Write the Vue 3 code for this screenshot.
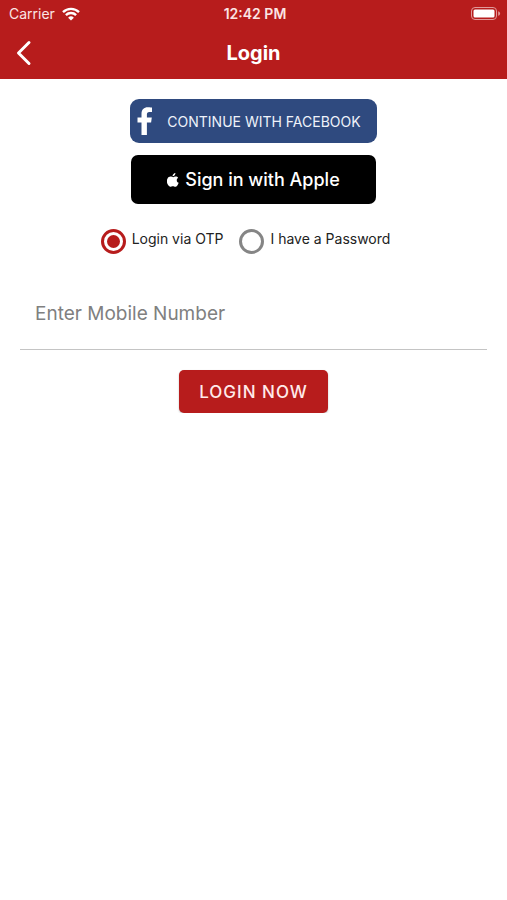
<script setup>
import { ref } from 'vue'

const method = ref('otp')
const mobile = ref('')
</script>

<template>
  <div class="screen">
    <header class="header">
      <div class="status">
        <div class="carrier">
          <span>Carrier</span>
          <svg class="wifi" viewBox="0 0 18 14" aria-hidden="true">
            <path d="M1 5.1a11.5 11.5 0 0 1 16 0" />
            <path d="M3.9 8.1a7.3 7.3 0 0 1 10.2 0" />
            <path class="dot" d="M9 13.6 6.1 10.7a4.1 4.1 0 0 1 5.8 0z" />
          </svg>
        </div>
        <span class="time">12:42 PM</span>
        <svg class="battery" viewBox="0 0 30 14" aria-hidden="true">
          <rect class="shell" x="0.5" y="0.5" width="25" height="12" rx="3.5" />
          <rect class="charge" x="2.500" y="2.5" width="21" height="8" rx="1.5" />
          <path class="cap" d="M27.2 4.200c2.6 1.100 2.6 3.500 0 4.600z" />
        </svg>
      </div>
      <nav class="bar">
        <button class="back" type="button" aria-label="Back">
          <svg viewBox="0 0 16 26" aria-hidden="true"><path d="M13 2.5 2.5 13 13 23.5" /></svg>
        </button>
        <h1>Login</h1>
      </nav>
    </header>

    <main class="content">
      <button class="social facebook" type="button">
        <svg class="fb" viewBox="0 0 16 28" aria-hidden="true">
          <path d="M4.500 28V15.500H.5v-5h4V6.800C4.500 2.500 7 .3 10.800.3c2.300 0 4.200.3 4.200.3v4.300h-2.600c-2 0-2.500 1-2.500 2.400v3.200h4.900l-.7 5H9.900V28z" />
        </svg>
        <span>CONTINUE WITH FACEBOOK</span>
      </button>

      <button class="social apple" type="button">
        <svg class="fruit" viewBox="0 0 24 28" aria-hidden="true">
          <path d="M16.800 0c.2 1.700-.5 3.300-1.500 4.500-1.100 1.300-2.700 2.200-4.200 2.100-.2-1.600.6-3.300 1.500-4.300C13.700 1 15.500.1 16.800 0zM22.300 9.600c-1.400.9-2.800 2.400-2.800 4.700 0 2.700 1.700 4.500 3.900 5.300-.5 1.500-1.200 2.900-2.100 4.200-1.300 1.900-2.600 3.800-4.700 3.800s-2.600-1.200-5-1.200-3 1.200-4.800 1.200c-2.100 0-3.600-2-4.900-3.900C-.5 20-1.200 14.500 1.100 10.800c1.300-2.200 3.600-3.600 6-3.600 2.200 0 3.600 1.200 5.300 1.200 1.600 0 2.700-1.200 5.300-1.200 1.800 0 3.500.9 4.600 2.400z" />
        </svg>
        <span>Sign in with Apple</span>
      </button>

      <div class="methods" role="radiogroup" aria-label="Login method">
        <label>
          <input v-model="method" type="radio" name="method" value="otp" />
          <span>Login via OTP</span>
        </label>
        <label>
          <input v-model="method" type="radio" name="method" value="password" />
          <span>I have a Password</span>
        </label>
      </div>

      <input
        v-model="mobile"
        class="mobile"
        type="tel"
        placeholder="Enter Mobile Number"
        aria-label="Enter Mobile Number"
      />

      <button class="submit" type="button">LOGIN NOW</button>
    </main>
  </div>
</template>

<style>
body {
  margin: 0;
  background: #fff;
}
</style>

<style scoped>
.screen {
  font-family: Inter, "Liberation Sans", sans-serif;
  color: #222;
}

button {
  padding: 0;
  border: 0;
  font-family: inherit;
  cursor: pointer;
}

.header {
  background: #b71c1c;
  color: #fff;
}

.status {
  display: grid;
  grid-template-columns: 1fr auto 1fr;
  align-items: center;
  height: 27px;
  padding: 0 6px 0 9px;
  font-size: 14px;
  color: #fbe4e4;
}

.carrier {
  display: flex;
  align-items: center;
  gap: 7px;
}

.wifi {
  width: 18px;
  height: 14px;
  fill: none;
  stroke: #fff;
  stroke-width: 2.4;
}

.wifi .dot {
  fill: #fff;
  stroke: none;
}

.time {
  font-weight: 600;
}

.battery {
  justify-self: end;
  width: 30px;
  height: 14px;
}

.shell {
  fill: none;
  stroke: #e09a9a;
}

.charge {
  fill: #fff;
}

.cap {
  fill: #e09a9a;
}

.bar {
  display: grid;
  grid-template-columns: 1fr auto 1fr;
  align-items: center;
  height: 52px;
  padding: 0 16px;
}

.back {
  display: flex;
  justify-self: start;
  background: none;
}

.back svg {
  width: 16px;
  height: 26px;
  fill: none;
  stroke: #fff;
  stroke-width: 3;
  stroke-linecap: round;
  stroke-linejoin: round;
}

h1 {
  margin: 0;
  font-size: 20px;
  font-weight: 700;
  line-height: 24px;
}

.content {
  display: flex;
  flex-direction: column;
  align-items: center;
  padding: 20px 20px 0;
}

.social {
  display: flex;
  align-items: center;
  color: #fff;
}

.facebook {
  gap: 14px;
  height: 44px;
  padding: 0 16px 0 7px;
  border-radius: 9px;
  background: #2f4a7f;
  color: #eef2fa;
  font-size: 14px;
}

.fb {
  width: 16px;
  height: 28px;
  fill: #fff;
}

.apple {
  justify-content: center;
  gap: 6px;
  width: 245px;
  height: 49px;
  margin-top: 12px;
  border-radius: 7px;
  background: #000;
  font-size: 18px;
  font-weight: 500;
}

.fruit {
  width: 12px;
  height: 14px;
  fill: #fff;
}

.methods {
  display: flex;
  gap: 16px;
  margin-top: 25px;
  padding-right: 16px;
}

.methods label {
  display: flex;
  gap: 6px;
  font-size: 14px;
  line-height: 20px;
}

.methods input {
  box-sizing: border-box;
  appearance: none;
  display: grid;
  place-items: center;
  width: 25px;
  height: 25px;
  margin: 0;
  border: 3px solid #858585;
  border-radius: 50%;
}

.methods input:checked {
  border-color: #b71c1c;
}

.methods input:checked::before {
  content: "";
  width: 13px;
  height: 13px;
  border-radius: 50%;
  background: #b71c1c;
}

.mobile {
  box-sizing: border-box;
  width: 100%;
  height: 72px;
  margin-top: 24px;
  padding: 0 15px;
  border: 0;
  border-bottom: 1px solid #c4c4c4;
  border-radius: 0;
  background: none;
  font-family: inherit;
  font-size: 19px;
  color: #222;
  outline: none;
}

.mobile::placeholder {
  color: #808080;
  opacity: 1;
}

.submit {
  height: 43px;
  margin-top: 20px;
  padding: 0 20px;
  border-radius: 5px;
  background: #b71c1c;
  box-shadow: 0 1px 2px rgba(0, 0, 0, 0.25);
  color: #ffeaea;
  font-size: 17px;
  font-weight: 500;
  letter-spacing: 1px;
}
</style>
